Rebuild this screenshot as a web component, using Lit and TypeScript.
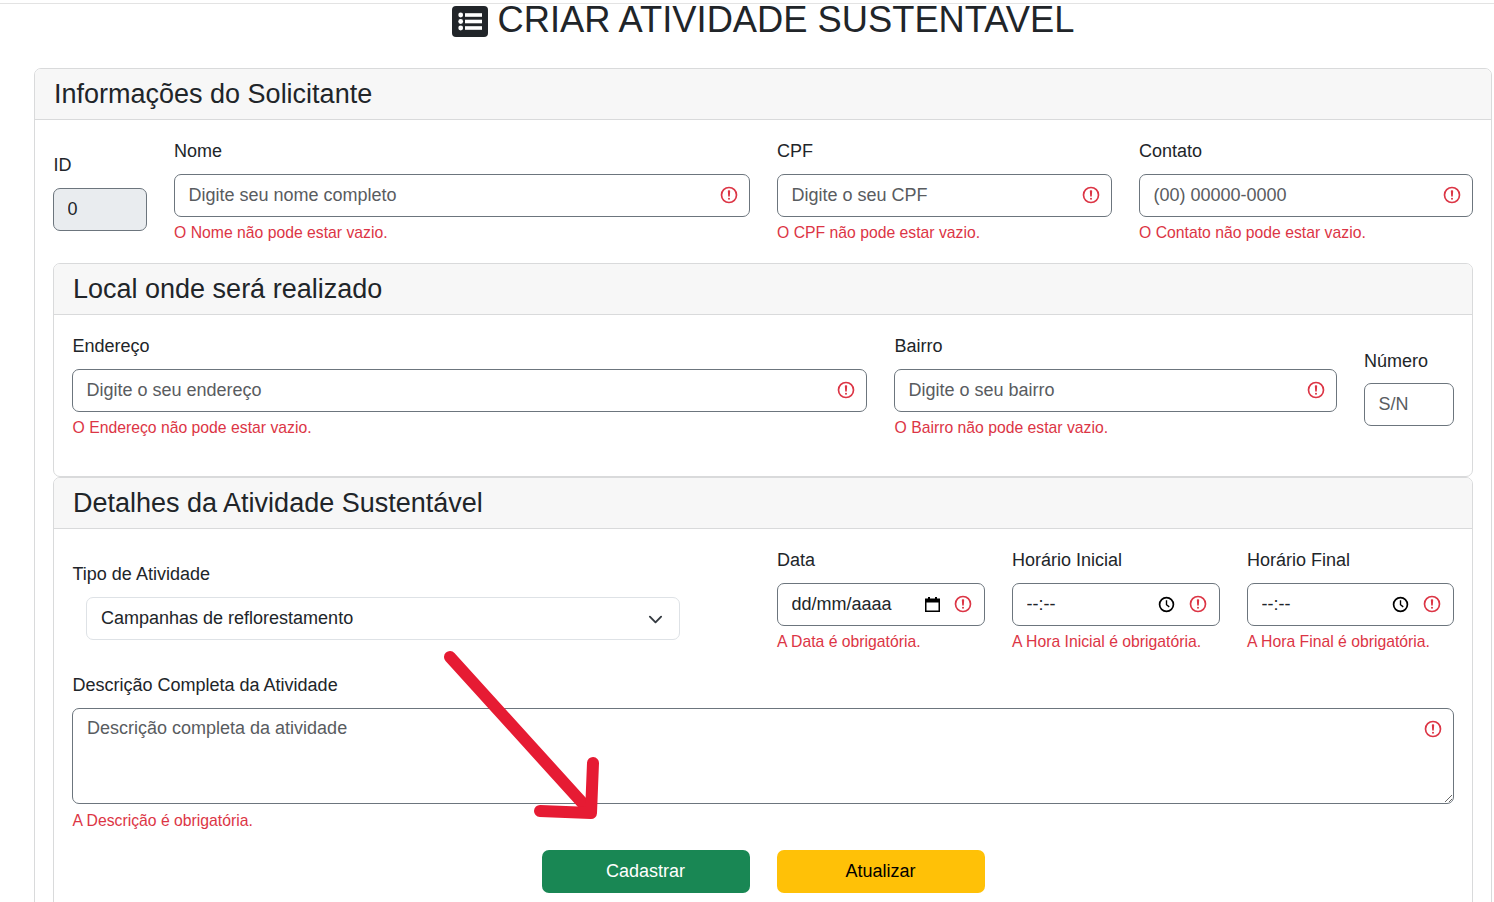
import { LitElement, css, html, svg } from "lit";
import { customElement } from "lit/decorators.js";

const errorIcon = html`<svg class="err-icon" viewBox="0 0 12 12" fill="none">
  <circle cx="6" cy="6" r="4.5" stroke="#dc3545"></circle>
  <path d="M5.8 3.6h.4L6 6.5z" stroke="#dc3545" fill="#dc3545" stroke-linejoin="round"></path>
  <circle cx="6" cy="8.2" r=".6" fill="#dc3545"></circle>
</svg>`;

const calendarIcon = html`<svg class="picker calendar" viewBox="0 0 15 15" fill="#000">
  <path
    fill-rule="evenodd"
    d="M3 0h2v1.500h5V0h2v1.500h3V15H0V1.500h3zM1.500 5.500V13.500h12V5.500z"
  ></path>
</svg>`;

const clockIcon = html`<svg class="picker" viewBox="0 0 16 16" fill="none" stroke="#000">
  <circle cx="8" cy="8" r="6.500" stroke-width="1.600"></circle>
  <path d="M8 4v4.200l2.600 2" stroke-width="1.300"></path>
</svg>`;

@customElement("app-root")
export class AppRoot extends LitElement {
  static styles = css`
    :host {
      display: block;
      position: relative;
      height: 902px;
      overflow: hidden;
      background: #fff;
      color: #212529;
      font-family: "Liberation Sans", Arial, sans-serif;
      font-size: 18px;
      line-height: 27px;
    }

    .page {
      margin-top: 3px;
      border-top: 1px solid #e3e3e3;
      padding: 0 2px 0 34px;
    }

    .title {
      display: flex;
      justify-content: center;
      align-items: center;
      gap: 10px;
      margin: 0 0 32px;
      height: 32px;
      font-size: 36.300px;
      font-weight: 400;
      line-height: 32px;
    }

    .title svg {
      width: 36px;
      height: 31px;
      margin-top: 3px;
    }

    .card {
      border: 1px solid #d9dadb;
      border-radius: 7px;
      background: #fff;
    }

    .card-header {
      margin: 0;
      height: 50px;
      padding: 0 18px 0 19px;
      border-bottom: 1px solid #d9dadb;
      border-radius: 6px 6px 0 0;
      background: #f7f7f7;
      font-size: 27px;
      font-weight: 400;
      line-height: 51px;
    }

    .card-body {
      padding: 18px;
    }

    .outer-body {
      padding-bottom: 200px;
    }

    .row {
      display: grid;
      gap: 27px;
      align-items: center;
    }

    .row-person {
      grid-template-columns: 94px 576px 335px 334px;
      margin-bottom: 18px;
    }

    .row-place {
      grid-template-columns: 795px 443px 90px;
      margin-bottom: 18px;
    }

    .row-detail {
      grid-template-columns: 678px 208px 208px 207px;
      margin-bottom: 18px;
    }

    label {
      display: block;
      margin-bottom: 9px;
    }

    .shift label,
    .shift .error,
    .shift-text {
      padding-left: 0.5px;
    }

    label.low-label {
      padding: 1px 0 0;
      margin-bottom: 8px;
    }

    .control {
      display: flex;
      align-items: center;
      height: 43px;
      box-sizing: border-box;
      padding: 0 10px 0 13.500px;
      border: 1px solid #6c757d;
      border-radius: 7px;
      background: #fff;
    }

    .control.with-picker {
      padding-right: 11px;
    }

    .control.locked {
      background: #e9ecef;
    }

    .control .err-icon {
      margin-bottom: 1px;
    }

    input {
      flex: 1;
      min-width: 0;
      padding: 0;
      border: 0;
      outline: 0;
      background: transparent;
      color: #212529;
      font: inherit;
    }

    input::placeholder,
    textarea::placeholder {
      color: #595c5f;
      opacity: 1;
    }

    .err-icon {
      flex: none;
      width: 20px;
      height: 20px;
    }

    .picker {
      flex: none;
      width: 17px;
      height: 17px;
      margin-right: 13px;
    }

    .picker.calendar {
      width: 15px;
      height: 15px;
    }

    .error {
      margin: 3.500px 0 1px;
      color: #dc3545;
      font-size: 15.750px;
      line-height: 23.625px;
    }

    .error.desc-error {
      margin: 4.500px 0 0;
    }

    .select-box {
      position: relative;
      width: 594px;
      margin-left: 14px;
    }

    select {
      display: block;
      width: 100%;
      height: 43px;
      padding: 0 40px 0 14px;
      border: 1px solid #dee2e6;
      border-radius: 7px;
      outline: 0;
      appearance: none;
      background: #fff;
      color: #212529;
      font: inherit;
    }

    .chevron {
      position: absolute;
      top: 14.500px;
      right: 17px;
      width: 15px;
      height: 15px;
      pointer-events: none;
    }

    .area-box {
      position: relative;
    }

    textarea {
      display: block;
      width: 100%;
      height: 96px;
      box-sizing: border-box;
      padding: 6px 40px 6px 14px;
      border: 1px solid #6c757d;
      border-radius: 7px;
      outline: 0;
      color: #212529;
      font: inherit;
    }

    .area-box .err-icon {
      position: absolute;
      top: 11px;
      right: 11px;
    }

    .actions {
      display: flex;
      justify-content: center;
      gap: 27px;
      margin-top: 17px;
    }

    button {
      width: 208px;
      height: 43px;
      border: 0;
      border-radius: 7px;
      font: inherit;
    }

    .save {
      background: #198754;
      color: #fff;
    }

    .update {
      background: #ffc107;
      color: #000;
    }

    .arrow {
      position: absolute;
      top: 0;
      left: 0;
      width: 1494px;
      height: 902px;
      pointer-events: none;
    }
  `;

  field(name: string, placeholder: string, error: string) {
    return html`
      <div>
        <label>${name}</label>
        <div class="control">
          <input placeholder=${placeholder} />
          ${errorIcon}
        </div>
        <div class="error">${error}</div>
      </div>
    `;
  }

  pickerField(name: string, value: string, icon: unknown, error: string) {
    return html`
      <div>
        <label>${name}</label>
        <div class="control with-picker">
          <input .value=${value} />
          ${icon} ${errorIcon}
        </div>
        <div class="error">${error}</div>
      </div>
    `;
  }

  render() {
    return html`
      <div class="page">
        <h1 class="title">
          <svg viewBox="0 0 36 31">
            <rect width="36" height="31" rx="4" fill="#212529"></rect>
            ${[9, 15.5, 22].map(
              (y) => svg`
                <circle cx="8.700" cy=${y} r="2.400" fill="#fff"></circle>
                <rect x="13" y=${y - 1.8} width="17" height="3.600" fill="#fff"></rect>
              `
            )}
          </svg>
          CRIAR ATIVIDADE SUSTENTAVEL
        </h1>

        <section class="card">
          <h3 class="card-header">Informações do Solicitante</h3>
          <div class="card-body outer-body">
            <div class="row row-person">
              <div class="shift">
                <label>ID</label>
                <div class="control locked"><input .value=${"0"} disabled /></div>
              </div>
              ${this.field("Nome", "Digite seu nome completo", "O Nome não pode estar vazio.")}
              ${this.field("CPF", "Digite o seu CPF", "O CPF não pode estar vazio.")}
              ${this.field("Contato", "(00) 00000-0000", "O Contato não pode estar vazio.")}
            </div>

            <section class="card">
              <h3 class="card-header">Local onde será realizado</h3>
              <div class="card-body">
                <div class="row row-place shift">
                  ${this.field("Endereço", "Digite o seu endereço", "O Endereço não pode estar vazio.")}
                  ${this.field("Bairro", "Digite o seu bairro", "O Bairro não pode estar vazio.")}
                  <div>
                    <label class="low-label">Número</label>
                    <div class="control"><input placeholder="S/N" /></div>
                  </div>
                </div>
              </div>
            </section>

            <section class="card">
              <h3 class="card-header">Detalhes da Atividade Sustentável</h3>
              <div class="card-body">
                <div class="row row-detail">
                  <div class="shift">
                    <label>Tipo de Atividade</label>
                    <div class="select-box">
                      <select>
                        <option>Campanhas de reflorestamento</option>
                      </select>
                      <svg class="chevron" viewBox="0 0 16 16" fill="none">
                        <path
                          d="m2 5 6 6 6-6"
                          stroke="#343a40"
                          stroke-width="2"
                          stroke-linecap="round"
                          stroke-linejoin="round"
                        ></path>
                      </svg>
                    </div>
                  </div>
                  ${this.pickerField("Data", "dd/mm/aaaa", calendarIcon, "A Data é obrigatória.")}
                  ${this.pickerField("Horário Inicial", "--:--", clockIcon, "A Hora Inicial é obrigatória.")}
                  ${this.pickerField("Horário Final", "--:--", clockIcon, "A Hora Final é obrigatória.")}
                </div>

                <label class="shift-text">Descrição Completa da Atividade</label>
                <div class="area-box">
                  <textarea placeholder="Descrição completa da atividade"></textarea>
                  ${errorIcon}
                </div>
                <div class="error desc-error shift-text">A Descrição é obrigatória.</div>

                <div class="actions">
                  <button class="save">Cadastrar</button>
                  <button class="update">Atualizar</button>
                </div>
              </div>
            </section>
          </div>
        </section>
      </div>

      <svg class="arrow" viewBox="0 0 1494 902" fill="none" stroke="#e61b33" stroke-width="12" stroke-linecap="round" stroke-linejoin="round">
        <path d="M450 657 587 808"></path>
        <path d="M593 763 591 813 540 811"></path>
      </svg>
    `;
  }
}
